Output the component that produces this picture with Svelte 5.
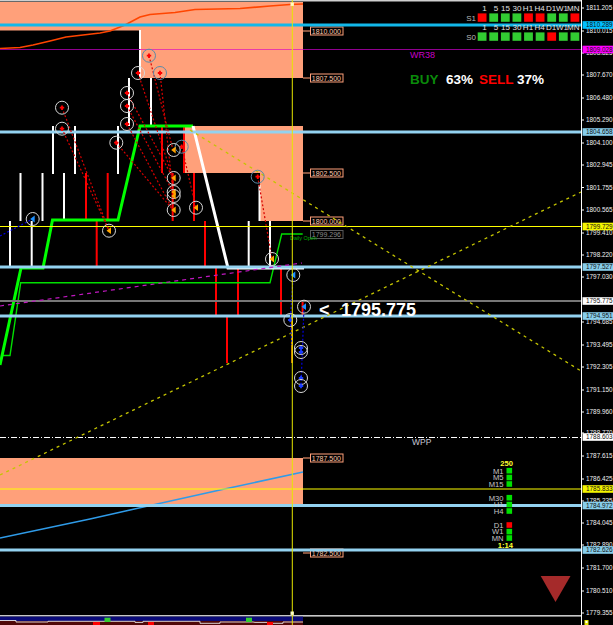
<script>
  const W = 613, H = 625;
  const axisX = 581;

  const ticks = [
    ['1811.205', 8], ['1810.015', 31], ['1808.825', 53], ['1807.670', 75], ['1806.480', 98], ['1805.290', 120],
    ['1804.100', 143], ['1802.945', 165], ['1801.755', 187.5], ['1800.565', 210], ['1799.410', 233], ['1798.220', 255],
    ['1797.030', 277], ['1794.685', 322], ['1793.495', 345], ['1792.305', 367], ['1791.150', 390], ['1789.960', 412],
    ['1788.770', 433], ['1787.615', 456], ['1786.425', 479], ['1785.235', 501], ['1784.045', 523], ['1782.890', 545],
    ['1781.700', 568], ['1780.510', 591], ['1779.355', 613]
  ];

  const tags = [
    ['1810.289', 25, '#00bfff'], ['1809.028', 49.5, '#ff00ff'], ['1804.658', 132, '#87ceeb'], ['1799.729', 226.5, '#f4f400'],
    ['1797.527', 267, '#87ceeb'], ['1795.775', 301, '#ffffff'], ['1794.951', 316, '#87ceeb'], ['1788.603', 437, '#ffffff'],
    ['1785.833', 489, '#f4f400'], ['1784.972', 505.5, '#87ceeb'], ['1782.626', 550, '#87ceeb']
  ];

  const zones = [
    [0, 2, 303, 28.5], [140, 30, 163, 48], [185, 126, 118, 47], [260, 173, 43, 48], [0, 458, 303, 47]
  ];

  const zoneTags = [['1810.000', 31], ['1807.500', 78], ['1802.500', 173], ['1800.000', 221], ['1787.500', 458], ['1782.500', 553]];

  // x, top, bottom
  const whites = [
    [53, 126, 174], [75, 126, 174], [118, 126, 174], [129, 78, 126], [151, 78, 126], [140, 30, 78],
    [20.5, 173, 221], [42.5, 173, 221], [64, 173, 221], [10, 221, 267], [31.7, 221, 267], [248.7, 221, 267], [270, 221, 267], [259.5, 185, 221]
  ];
  const reds = [
    [86, 173, 221], [107.7, 173, 221], [172.7, 173, 221], [194, 173, 221], [162, 126, 173], [184, 126, 173],
    [96.7, 221, 267], [205, 221, 267], [216, 267, 316], [238, 267, 316], [281, 267, 316], [227, 316, 363], [302.6, 300, 316]
  ];

  const redArrows = [
    [62, 107.7, 109, 230.7], [62, 128.7, 109, 230.7], [116.3, 142.7, 173, 210], [127, 93, 173, 178], [127, 106, 173, 192],
    [127, 124, 173, 210], [138, 73, 173, 178], [149, 55.7, 173, 150], [160, 73, 173, 192], [181.7, 146.7, 196, 207.7], [257.7, 176.7, 272, 259]
  ];
  const blueArrows = [[0, 236, 32.7, 219], [293.3, 275, 290.3, 320], [290.3, 320, 292, 345], [304, 306.7, 301, 386]];

  const redMarks = [[62, 107.7], [62, 128.7], [127, 93], [127, 106], [127, 124], [116.3, 142.7], [138, 73]];
  const redBlueMarks = [[149, 55.7], [160, 73], [181.7, 146.7], [257.7, 176.7]];
  const orangeMarks = [[173.7, 150], [173.7, 178], [173.7, 192], [173.7, 196], [173.7, 210], [196, 207.7], [109, 230.7], [272, 259]];
  const blueTriMarks = [[32.7, 219], [293.3, 275], [304, 306.7]];
  const bluePlusMarks = [[290.3, 320], [301, 348], [301, 352], [301, 378], [301, 386]];

  const headers = ['1', '5', '15', '30', 'H1', 'H4', 'D1', 'W1', 'MN'];
  const s1 = 'rgggrrggr';
  const s0 = 'ggggggrgg';
  const cellX = (i) => 477.7 + i * 11.6;

  const tfRows = [['M1', 470.7, 'g'], ['M5', 477.5, 'g'], ['M15', 484, 'g'], ['M30', 497.7, 'g'], ['H1', 504.5, 'g'], ['H4', 511, 'g'], ['D1', 525, 'r'], ['W1', 531.6, 'g'], ['MN', 538, 'g']];
</script>

<svg class="chart" viewBox="0 0 {W} {H}" width={W} height={H}>
  <rect width={W} height={H} fill="#000" />
  <rect x="0" y="0" width={axisX} height="1.5" fill="#cfcfcf" />

  {#each zones as z}
    <rect x={z[0]} y={z[1]} width={z[2]} height={z[3]} fill="#ffa07a" />
  {/each}

  <!-- zone price tags -->
  {#each zoneTags as t}
    <line x1="303" y1={t[1]} x2="310" y2={t[1]} stroke="#e08a66" stroke-width="1.2" />
    <rect x="310.5" y={t[1] - 4} width="32.5" height="8" fill="#000" stroke="#ffa07a" />
    <text class="ztag" x="311.8" y={t[1] + 2.6} fill="#ffc8ac">{t[0]}</text>
  {/each}
  <rect x="310.5" y="230.5" width="32.5" height="8" fill="#000" stroke="#5a5a5a" />
  <text class="ztag" x="311.8" y="237.1" fill="#8a8a8a">1799.296</text>

  <!-- candles -->
  {#each whites as c}
    <line x1={c[0]} y1={c[1]} x2={c[0]} y2={c[2]} stroke="#fff" stroke-width="2" />
  {/each}
  {#each reds as c}
    <line x1={c[0]} y1={c[1]} x2={c[0]} y2={c[2]} stroke="#f00" stroke-width="2" />
  {/each}
  <line x1="292" y1="316" x2="292" y2="363" stroke="#ff9000" stroke-width="1.6" />

  <polyline class="ma" points="2,355.5 10,355.5 20.7,282.7 270,282.7 281.7,234 302.7,234" stroke="#00e000" stroke-width="1.4" />
  <polyline class="ma" points="0,365 21,268 43,268 52.5,220 118,220 140,126 193,126" stroke="#00ff00" stroke-width="3" />
  <polyline class="ma" points="193,126 228,268 304,268" stroke="#fff" stroke-width="3" />

  <text class="daily" x="290" y="240">Daily Open</text>

  <!-- top curve -->
  <polyline class="ma" stroke="#ff4500" stroke-width="1.6"
    points="0,48.5 20,47.5 33,45 50,41 66,37 83,35 100,33 110,31 125,25 140,17 150,14.5 175,12.5 195,9.5 240,8.5 270,6 290,4.5 303,4" />
  <polyline class="ma" stroke="#2f9be8" stroke-width="1.5" points="0,538 90,519 130,510 220,490 303,472" />

  <!-- levels -->
  <line x1="0" y1="49.5" x2="140" y2="49.5" stroke="#900090" stroke-width="1.2" />
  <line x1="140" y1="49.5" x2="303" y2="49.5" stroke="#e83ca8" stroke-width="1.2" />
  <line x1="303" y1="49.5" x2={axisX} y2="49.5" stroke="#900090" stroke-width="1.2" />
  <line x1="0" y1="301" x2={axisX} y2="301" stroke="#777" stroke-width="1.8" />
  <line x1="0" y1="226.5" x2={axisX} y2="226.5" stroke="#ff0" />
  <line x1="0" y1="489" x2={axisX} y2="489" stroke="#ff0" />
  <line x1="0" y1="437.5" x2={axisX} y2="437.5" stroke="#fff" stroke-dasharray="6 2 1 2" />
  {#each tags as t}
    {#if t[2] === '#87ceeb'}
      <line x1="0" y1={t[1]} x2={axisX} y2={t[1]} stroke="#93d2f0" stroke-width="3" />
    {/if}
  {/each}
  <line x1="0" y1="25" x2={axisX} y2="25" stroke="#12b8ea" stroke-width="3" />

  <!-- trend lines -->
  <line x1="190" y1="130" x2={axisX} y2="371" stroke="#c4c400" stroke-width="1.3" stroke-dasharray="3 4" />
  <line x1="0" y1="475" x2={axisX} y2="192" stroke="#c4c400" stroke-width="1.3" stroke-dasharray="3 4" />
  <line x1="0" y1="306" x2="302" y2="263" stroke="#c018c0" stroke-width="1.2" stroke-dasharray="4 4" />

  {#each redArrows as a}
    <line x1={a[0]} y1={a[1]} x2={a[2]} y2={a[3]} stroke="#d80000" stroke-width="1.2" stroke-dasharray="2 2" />
  {/each}
  {#each blueArrows as a}
    <line x1={a[0]} y1={a[1]} x2={a[2]} y2={a[3]} stroke="#0000e0" stroke-width="1.2" stroke-dasharray="2 2" />
  {/each}

  <!-- trade markers -->
  {#each redMarks as m}
    <circle class="ring" cx={m[0]} cy={m[1]} r="6.5" />
    <path d="M{m[0] - 2.2} {m[1]}h4.4M{m[0]} {m[1] - 2.2}v4.4" stroke="#f00" stroke-width="1.8" />
  {/each}
  {#each redBlueMarks as m}
    <circle class="ring blue" cx={m[0]} cy={m[1]} r="6.5" />
    <path d="M{m[0] - 2.2} {m[1]}h4.4M{m[0]} {m[1] - 2.2}v4.4" stroke="#f00" stroke-width="1.8" />
  {/each}
  {#each orangeMarks as m}
    <circle class="ring" cx={m[0]} cy={m[1]} r="6.5" />
    <path d="M{m[0] - 2.5} {m[1]}l4.5 -3.4v6.8z" fill="#ffa500" />
  {/each}
  {#each blueTriMarks as m}
    <circle class="ring" cx={m[0]} cy={m[1]} r="6.5" />
    <path d="M{m[0] - 2.5} {m[1]}l4.5 -3.4v6.8z" fill="#1e90ff" />
  {/each}
  {#each bluePlusMarks as m}
    <circle class="ring" cx={m[0]} cy={m[1]} r="6.5" />
    <path d="M{m[0] - 2.2} {m[1]}h4.4M{m[0]} {m[1] - 2.2}v4.4" stroke="#1a3cff" stroke-width="1.8" />
  {/each}

  <!-- signal table -->
  {#each headers as h, i}
    <text class="head" x={cellX(i) + 9} y="11">{h}</text>
    <text class="head" x={cellX(i) + 9} y="30">{h}</text>
    <rect x={cellX(i)} y="13.4" width="8.8" height="8.4" fill={s1[i] === 'r' ? '#f00' : '#32cd32'} />
    <rect x={cellX(i)} y="32.4" width="8.8" height="8.4" fill={s0[i] === 'r' ? '#f00' : '#32cd32'} />
  {/each}
  <text class="head dim" x="476" y="21">S1</text>
  <text class="head dim" x="476" y="40">S0</text>

  <text class="wr" x="410" y="58.4">WR38</text>
  <g class="score">
    <text x="410" y="84.3" fill="#0a8a0a">BUY</text>
    <text x="446" y="84.3" fill="#fff">63%</text>
    <text x="479" y="84.3" fill="#f00">SELL</text>
    <text x="517" y="84.3" fill="#fff">37%</text>
  </g>

  <text class="big" x="319" y="316">&lt;</text>
  <text class="big" x="341" y="316">1795.775</text>
  <text class="wpp" x="412" y="445">WPP</text>

  <!-- timeframe list -->
  <text class="tf yellow" x="513" y="465.5">250</text>
  {#each tfRows as r}
    <text class="tf" x="503.5" y={r[1] + 2.8}>{r[0]}</text>
    <rect x="506.5" y={r[1] - 2.8} width="5.6" height="5.6" fill={r[2] === 'r' ? '#f00' : '#00e000'} />
  {/each}
  <text class="tf yellow" x="513" y="548">1:14</text>

  <polygon points="540.7,576 570.5,576 555.5,602" fill="#a52a2a" />

  <!-- indicator strip -->
  <rect x="0" y="615" width={axisX} height="1.6" fill="#c8c8c8" />
  <rect x="0" y="616.6" width="303" height="4.4" fill="#0a0a78" />
  <rect x="0" y="621" width="303" height="4" fill="#500808" />
  <polyline class="ma" stroke="#e8e8e8" stroke-width="0.9"
    points="0,620.5 16,620.5 16,622 48,622 48,621.3 135,621.3 135,622.4 143,622.4 143,621.3 200,621.3 200,623.3 220,623.3 220,622 253,622 255,622.4 267,622.4 273,623.3 283,623.3 283,622 303,622" />
  <rect x="93" y="622" width="7" height="3" fill="#f00" />
  <rect x="148" y="622" width="6" height="3" fill="#f00" />
  <rect x="267" y="622" width="6" height="3" fill="#f00" />
  <rect x="104.5" y="617.7" width="6" height="4.3" fill="#32cd32" />
  <rect x="246" y="617.7" width="6" height="4.3" fill="#32cd32" />

  <!-- cursor line -->
  <line x1="292.3" y1="0" x2="292.3" y2={H} stroke="#e6e600" />
  <rect x="290.5" y="2.5" width="3.4" height="3.4" fill="#ffffc0" />
  <rect x="290.5" y="611.5" width="3.4" height="3.4" fill="#ffffc0" />

  <!-- price axis -->
  <line x1={axisX + 0.5} y1="0" x2={axisX + 0.5} y2={H} stroke="#fff" />
  {#each ticks as t}
    <line x1={axisX} y1={t[1]} x2={axisX + 3} y2={t[1]} stroke="#fff" />
    <text class="tick" x="586" y={t[1] + 2.3} fill="#f0f0f0">{t[0]}</text>
  {/each}
  {#each tags as t}
    <rect x={axisX + 1.5} y={t[1] - 3.8} width={W - axisX} height="7.6" fill={t[2]} />
    <text class="tick" x="586" y={t[1] + 2.3} fill="#111">{t[0]}</text>
  {/each}
  <rect x="584.5" y="620" width="4" height="5" fill="#e6e600" />
  <rect x="585.5" y="621" width="2" height="2" fill="#fff" />
</svg>

<style>
  :global(body) {
    margin: 0;
    background: #000;
  }
  .chart {
    display: block;
  }
  .chart text {
    font-family: "Liberation Sans", Arial, sans-serif;
  }
  .ma {
    fill: none;
  }
  .ring {
    fill: none;
    stroke: #d8d8d8;
    stroke-width: 1;
  }
  .ring.blue {
    stroke: #5b8aa8;
  }
  .chart .tick {
    font-size: 6.4px;
  }
  .chart .ztag {
    font-size: 7px;
  }
  .chart .head {
    font-size: 8px;
    fill: #e0e0e0;
    text-anchor: end;
  }
  .chart .head.dim {
    fill: #b8b8b8;
  }
  .chart .wr {
    font-size: 9px;
    fill: #c800c8;
  }
  .score text {
    font-size: 13.5px;
    font-weight: bold;
  }
  .chart .big {
    font-size: 18px;
    font-weight: bold;
    fill: #fff;
  }
  .chart .wpp {
    font-size: 8.5px;
    fill: #c8c8d8;
  }
  .chart .daily {
    font-size: 5.4px;
    fill: #00b000;
  }
  .chart .tf {
    font-size: 7.6px;
    fill: #c8c8c8;
    text-anchor: end;
  }
  .chart .tf.yellow {
    fill: #ffff30;
    font-weight: bold;
  }
</style>
